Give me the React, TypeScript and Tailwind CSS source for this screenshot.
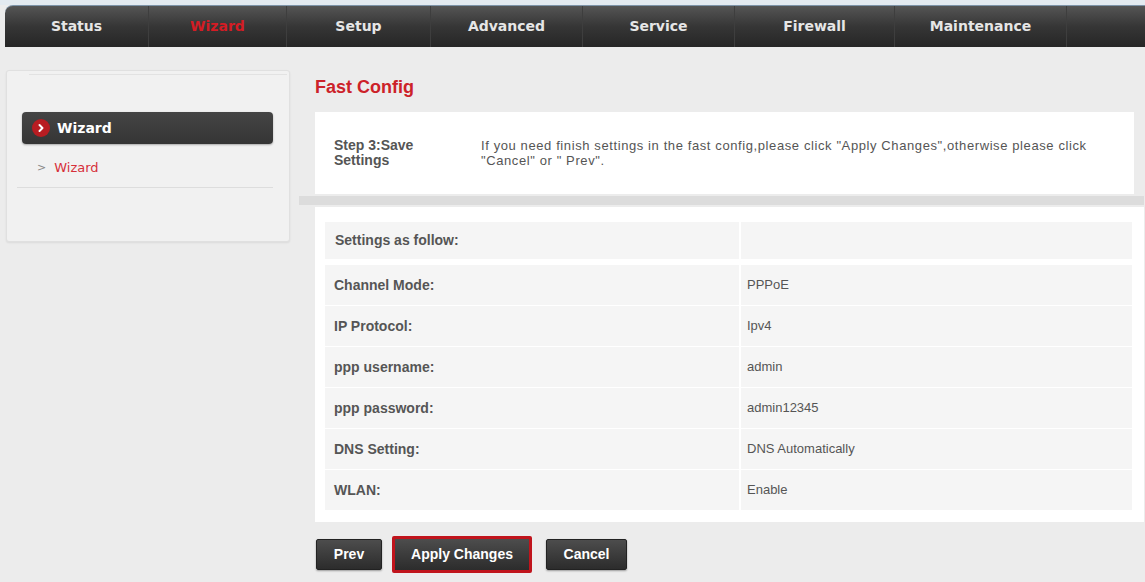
import { ChevronRight } from "lucide-react";

const navItems = [
  { label: "Status", w: "w-[143px]" },
  { label: "Wizard", w: "w-[138px]", active: true },
  { label: "Setup", w: "w-[144px]" },
  { label: "Advanced", w: "w-[152px]" },
  { label: "Service", w: "w-[152px]" },
  { label: "Firewall", w: "w-[160px]" },
  { label: "Maintenance", w: "w-[172px]" },
];

const settings = [
  ["Channel Mode:", "PPPoE"],
  ["IP Protocol:", "Ipv4"],
  ["ppp username:", "admin"],
  ["ppp password:", "admin12345"],
  ["DNS Setting:", "DNS Automatically"],
  ["WLAN:", "Enable"],
];

function TopNav() {
  return (
    <div className="ml-[5px] flex h-[42px] items-stretch rounded-tl-[8px] border-t border-[#7d93a8] bg-gradient-to-b from-[#555555] via-[#363636] to-[#262626] font-['DejaVu_Sans',sans-serif] text-[14px] font-bold">
      {navItems.map((item, i) => (
        <div
          key={item.label}
          className={`flex flex-none items-center justify-center ${item.w} ${
            i > 0 ? "border-l border-[#3e3e3e]" : ""
          } ${item.active ? "text-[#d41c24]" : "text-[#e6e6e6]"}`}
        >
          {item.label}
        </div>
      ))}
      <div className="grow border-l border-[#3e3e3e]" />
    </div>
  );
}

function SideMenu() {
  return (
    <div className="ml-[6px] mt-[23px] h-[172px] w-[284px] flex-none rounded-[3px] border border-[#e0e0e0] bg-[#f1f1f1] shadow-[0_1px_2px_rgba(0,0,0,0.08)]">
      <div className="ml-[22px] mr-[2px] mt-[3px] h-px bg-[#e2e2e2]" />
      <div className="ml-[15px] mr-[16px] mt-[37px] flex h-[32px] items-center rounded-[4px] bg-gradient-to-b from-[#454545] to-[#353535] shadow-[0_1px_2px_rgba(0,0,0,0.3)]">
        <span className="ml-[10px] flex h-[18px] w-[18px] items-center justify-center rounded-full bg-[#b81d22]">
          <ChevronRight className="h-[12px] w-[12px] text-white" strokeWidth={4} />
        </span>
        <span className="ml-[7px] font-['DejaVu_Sans',sans-serif] text-[14px] font-bold text-white">
          Wizard
        </span>
      </div>
      <div className="ml-[30px] mt-[14px] flex items-center font-['DejaVu_Sans',sans-serif]">
        <span className="text-[11px] text-[#888888]">&gt;</span>
        <span className="ml-[8px] text-[13px] text-[#d6303a]">Wizard</span>
      </div>
      <div className="ml-[10px] mr-[16px] mt-[9px] h-px bg-[#dddddd]" />
    </div>
  );
}

function FastConfig() {
  return (
    <div className="ml-[25px] w-[829px] flex-none">
      <h1 className="mt-[29px] text-[18px] font-bold leading-[22px] text-[#cc2229]">
        Fast Config
      </h1>

      <div className="mt-[14px] flex h-[82px] w-[819px] items-center bg-white text-[#555555]">
        <div className="w-[166px] flex-none pl-[19px] text-[14px] font-bold leading-[15px]">
          Step 3:Save
          <br />
          Settings
        </div>
        <p className="w-[628px] text-[13px] leading-[15px] tracking-[0.6px]">
          If you need finish settings in the fast config,please click "Apply
          Changes",otherwise please click "Cancel" or " Prev".
        </p>
      </div>

      <div className="-ml-[16px] mt-[2px] h-[9px] bg-[#dcdcdc]" />

      <div className="mt-[2px] bg-white pb-[11px] pl-[10px] pr-[12px] pt-[15px] text-[#555555]">
        <div className="flex h-[37px] items-center bg-[#f5f5f5]">
          <div className="w-[414px] flex-none pl-[10px] text-[14px] font-bold">
            Settings as follow:
          </div>
          <div className="h-full grow border-l-2 border-white" />
        </div>
        <div className="mt-[6px]">
          {settings.map(([label, value]) => (
            <div
              key={label}
              className="flex h-[41px] items-center border-b border-white bg-[#f5f5f5]"
            >
              <div className="w-[414px] flex-none pl-[9px] text-[14px] font-bold">
                {label}
              </div>
              <div className="flex h-full grow items-center border-l-2 border-white pl-[6px] text-[13px]">
                {value}
              </div>
            </div>
          ))}
        </div>
      </div>

      <div className="mt-[14px] flex items-center text-[14px] font-bold text-white">
        <button className="ml-[1px] h-[31px] w-[66px] rounded-[2px] border border-[#222222] bg-gradient-to-b from-[#4d4d4d] to-[#2c2c2c] shadow-[0_1px_2px_rgba(0,0,0,0.35)]">
          Prev
        </button>
        <button className="ml-[10px] h-[37px] w-[140px] rounded-[2px] border-[3px] border-[#c0141c] bg-gradient-to-b from-[#4d4d4d] to-[#2c2c2c]">
          Apply Changes
        </button>
        <button className="ml-[14px] h-[31px] w-[81px] rounded-[2px] border border-[#222222] bg-gradient-to-b from-[#4d4d4d] to-[#2c2c2c] shadow-[0_1px_2px_rgba(0,0,0,0.35)]">
          Cancel
        </button>
      </div>
    </div>
  );
}

export default function App() {
  return (
    <div className="h-[582px] w-[1145px] overflow-hidden bg-[#ececec] font-['Liberation_Sans',Arial,sans-serif]">
      <div className="h-[5px] bg-[#e3eaf0]" />
      <TopNav />
      <div className="flex items-start">
        <SideMenu />
        <FastConfig />
      </div>
    </div>
  );
}
